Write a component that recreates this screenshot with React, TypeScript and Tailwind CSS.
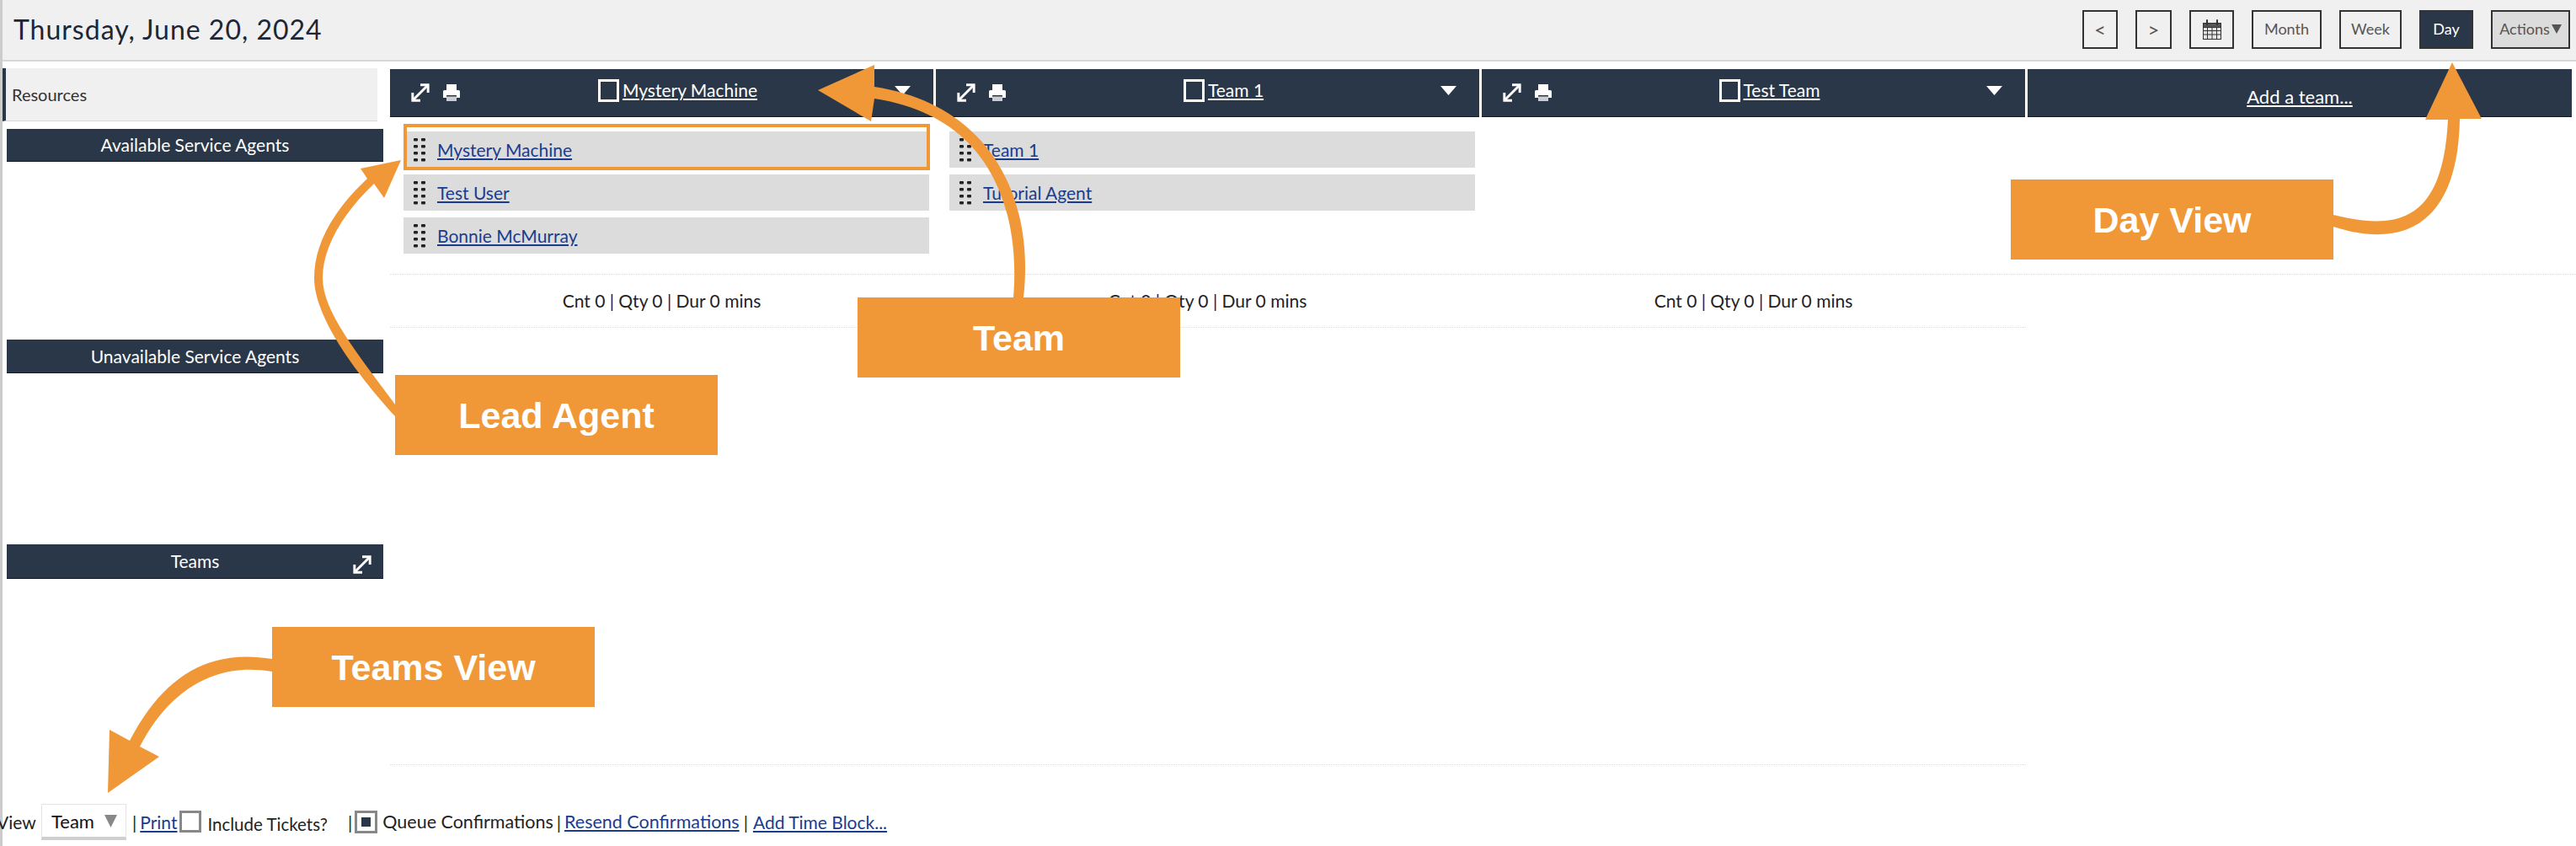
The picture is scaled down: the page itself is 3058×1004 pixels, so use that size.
const ORANGE = "#f09838";

const teams = [
  { name: "Mystery Machine", agents: ["Mystery Machine", "Test User", "Bonnie McMurray"] },
  { name: "Team 1", agents: ["Team 1", "Tutorial Agent"] },
  { name: "Test Team", agents: [] as string[] },
];

function Caret({ className }: { className: string }) {
  return (
    <svg viewBox="0 0 20 12" preserveAspectRatio="none" className={className} fill="currentColor">
      <path d="M0 0H20L10 12Z" />
    </svg>
  );
}

function ExpandIcon({ className }: { className: string }) {
  return (
    <svg viewBox="0 0 24 24" className={className} fill="none" stroke="currentColor" strokeWidth="3.2">
      <path d="M3 21L21 3" />
      <path d="M12 2H22V12" />
      <path d="M2 12V22H12" />
    </svg>
  );
}

function PrintIcon({ className }: { className: string }) {
  return (
    <svg viewBox="0 0 22 22" className={className} fill="currentColor">
      <path d="M5 1H17V8H5Z" />
      <path d="M1 9.5C1 8.5 2 8 3 8H19C20 8 21 8.5 21 9.5V17H17V14H5V17H1Z" />
      <path d="M5 15.5H17V21H5Z" opacity="0.75" />
    </svg>
  );
}

function Grip() {
  return (
    <svg viewBox="0 0 14 28" className="w-[14px] h-[28px] shrink-0 text-[#222]" fill="currentColor">
      <rect x="0" y="0" width="5" height="3.4" rx="1" />
      <rect x="9" y="0" width="5" height="3.4" rx="1" />
      <rect x="0" y="8" width="5" height="3.4" rx="1" />
      <rect x="9" y="8" width="5" height="3.4" rx="1" />
      <rect x="0" y="16" width="5" height="3.4" rx="1" />
      <rect x="9" y="16" width="5" height="3.4" rx="1" />
      <rect x="0" y="24" width="5" height="3.4" rx="1" />
      <rect x="9" y="24" width="5" height="3.4" rx="1" />
    </svg>
  );
}

function CalendarIcon() {
  return (
    <svg viewBox="0 0 22 24" className="w-[22px] h-[24px]" fill="none" stroke="#333">
      <rect x="0.5" y="4.5" width="21" height="19" fill="#e4e4e4" />
      <rect x="0.5" y="4.5" width="21" height="5" fill="#555" />
      <path d="M0.5 13.5H21.5M0.5 18H21.5M5.5 9.5V23.5M11 9.5V23.5M16.5 9.5V23.5" strokeWidth="1" />
      <path d="M5 1V6M17 1V6" strokeWidth="2" strokeLinecap="round" />
    </svg>
  );
}

function TopButton({ label, className }: { label: React.ReactNode; className: string }) {
  return (
    <div className={`h-[46px] flex items-center justify-center border-2 border-[#333] text-[#555] text-[18px] ${className}`}>
      {label}
    </div>
  );
}

function SideHeader({ title, className, icon }: { title: string; className: string; icon?: boolean }) {
  return (
    <div className={`relative ml-[5px] w-[447px] bg-[#2a3748] border-b border-[#111a26] text-white text-[21px] flex items-center justify-center ${className}`}>
      {title}
      {icon && <ExpandIcon className="absolute right-[14px] top-[13px] w-[22px] h-[22px]" />}
    </div>
  );
}

function TeamHeader({ name }: { name: string }) {
  return (
    <div className="w-[645px] h-[57px] bg-[#2a3748] border-b border-[#111a26] text-white flex items-center pl-[25px] pr-[27px]">
      <div className="w-[59px] flex items-center justify-between">
        <ExpandIcon className="w-[22px] h-[22px]" />
        <PrintIcon className="w-[22px] h-[22px]" />
      </div>
      <div className="flex-1 flex items-center justify-center -mt-[6px] gap-[4px]">
        <span className="w-[25px] h-[27px] border-[3px] border-white" />
        <span className="text-[21px] underline underline-offset-2">{name}</span>
      </div>
      <div className="w-[19px] flex justify-end -mt-[6px]">
        <Caret className="w-[19px] h-[11px]" />
      </div>
    </div>
  );
}

function AgentRow({ name, lead }: { name: string; lead?: boolean }) {
  return (
    <div className="relative ml-[16px] mr-[5px] h-[43px] bg-[#dcdcdc] flex items-center pl-[12px] gap-[14px]">
      <Grip />
      <a className="text-[21px] text-[#1a3c8f] underline underline-offset-2">{name}</a>
      {lead && <div className="absolute -top-[9px] -bottom-[3px] left-0 -right-[1px] border-4 border-[#f09838]" />}
    </div>
  );
}

function Label({ text, className }: { text: string; className: string }) {
  return (
    <div className={`absolute w-[383px] h-[95px] pt-[2px] bg-[#f09838] text-white font-bold text-[43px] flex items-center justify-center font-['Liberation_Sans',sans-serif] ${className}`}>
      {text}
    </div>
  );
}

function Arrows() {
  return (
    <svg viewBox="0 0 3058 1004" className="absolute inset-0 w-[3058px] h-[1004px] pointer-events-none" fill={ORANGE}>
      <path d="M1203 353C1210 270 1190 140 1038 117L1034 144L971 107L1038 77L1038 103C1180 125 1228 240 1215 353Z" />
      <path d="M469 480C425 420 383 370 383 330C383 295 405 255 444 218L456 235L476 190L428 200L436 212C390 255 373 295 373 330C373 375 420 440 469 494Z" />
      <path d="M2770 255C2850 275 2900 260 2906 142L2879 142L2911 74L2946 141L2920 141C2918 270 2850 295 2770 269Z" />
      <path d="M323 782C250 770 195 800 154 879L130 866L128 941L189 898L166 886C200 820 255 785 323 797Z" />
    </svg>
  );
}

export default function App() {
  return (
    <div className="relative w-[3058px] h-[1004px] overflow-hidden bg-white flex font-['Lato',sans-serif] text-[#222]">
      <div className="w-[3px] bg-[#cccccc] shrink-0" />
      <div className="flex-1 min-w-0 flex flex-col">
        {/* Date bar */}
        <div className="h-[73px] shrink-0 bg-[#f0f0f0] border-b-2 border-[#d8d8d8] flex items-center pl-[13px] pr-[7px]">
          <h1 className="text-[32px] text-[#1c2636] tracking-[1px] -mt-[2px]">Thursday, June 20, 2024</h1>
          <div className="ml-auto flex gap-[21px] -mt-[2px]">
            <TopButton label={<span className="text-[24px]">&lt;</span>} className="w-[42px]" />
            <TopButton label={<span className="text-[24px]">&gt;</span>} className="w-[43px]" />
            <TopButton label={<CalendarIcon />} className="w-[53px]" />
            <TopButton label="Month" className="w-[83px]" />
            <TopButton label="Week" className="w-[74px]" />
            <TopButton label="Day" className="w-[64px] bg-[#2a3748] border-[#2a3748] !text-white" />
            <TopButton
              label={
                <span className="flex items-center gap-[2px]">
                  Actions
                  <Caret className="w-[12px] h-[11px]" />
                </span>
              }
              className="w-[94px] bg-[#dcdcdc]"
            />
          </div>
        </div>

        <div className="flex-1 min-h-0 flex pt-[9px]">
          {/* Resources column */}
          <div className="w-[460px] shrink-0 -mt-[1px]">
            <div className="w-[445px] h-[63px] bg-[#f0f0f0] border-l-4 border-[#2a3748] border-b border-b-[#d8d8d8] flex items-center pl-[7px] text-[20px] text-[#333]">
              Resources
            </div>
            <SideHeader title="Available Service Agents" className="mt-[9px] h-[39px]" />
            <SideHeader title="Unavailable Service Agents" className="mt-[211px] h-[40px]" />
            <SideHeader title="Teams" className="mt-[203px] h-[41px]" icon />
          </div>

          {/* Team board */}
          <div className="flex-1 min-w-0">
            <div className="flex gap-[3px]">
              {teams.map((t) => (
                <TeamHeader key={t.name} name={t.name} />
              ))}
              <div className="w-[646px] h-[57px] bg-[#2a3748] border-b border-[#111a26] text-white text-[22px] flex items-center justify-center pt-[8px]">
                <span className="underline underline-offset-2">Add a team...</span>
              </div>
            </div>
            <div className="flex gap-[3px] h-[186px] pt-[17px]">
              {teams.map((t) => (
                <div key={t.name} className="w-[645px] flex flex-col gap-[8px]">
                  {t.agents.map((a, i) => (
                    <AgentRow key={a} name={a} lead={t.name === "Mystery Machine" && i === 0} />
                  ))}
                </div>
              ))}
            </div>
            <div className="border-t border-dotted border-[#dcdcdc]">
              <div className="w-[1942px] h-[63px] border-b border-dotted border-[#dcdcdc] flex gap-[3px]">
                {teams.map((t) => (
                  <div key={t.name} className="w-[645px] flex items-center justify-center text-[21px]">
                    Cnt 0 | Qty 0 | Dur 0 mins
                  </div>
                ))}
              </div>
            </div>
            <div className="w-[1942px] h-[519px] border-b border-dotted border-[#dcdcdc]" />
          </div>
        </div>

        {/* Footer controls */}
        <div className="h-[43px] mb-[7px] shrink-0 flex items-center text-[21px] whitespace-nowrap">
          <span className="-ml-[7px] w-[53px]">View</span>
          <div className="w-[101px] h-[43px] border border-[#e4e4e4] border-b-4 border-b-[#cfcfcf] flex items-center pl-[11px] text-[#111] text-[22px]">
            Team
            <Caret className="w-[15px] h-[15px] ml-[12px] text-[#888]" />
          </div>
          <span className="ml-[7px]">|</span>
          <a className="ml-[4px] text-[#1a3c8f] underline underline-offset-2">Print</a>
          <span className="ml-[3px] w-[26px] h-[26px] border-[3px] border-[#888] -mt-[1px]" />
          <span className="ml-[7px] mt-[6px] text-[20.5px]">Include Tickets?</span>
          <span className="ml-[24px]">|</span>
          <span className="ml-[3px] w-[27px] h-[27px] border-[3px] border-[#888] flex items-center justify-center">
            <span className="w-[11px] h-[11px] bg-[#2a3748]" />
          </span>
          <span className="ml-[6px] text-[21.5px]">Queue Confirmations</span>
          <span className="ml-[4px]">|</span>
          <a className="ml-[4px] text-[#1a3c8f] underline underline-offset-2 text-[21.5px]">Resend Confirmations</a>
          <span className="ml-[5px]">|</span>
          <a className="ml-[6px] text-[#1a3c8f] underline underline-offset-2">Add Time Block...</a>
        </div>
      </div>

      {/* Annotation overlay */}
      <Arrows />
      <Label text="Team" className="left-[1018px] top-[353px]" />
      <Label text="Lead Agent" className="left-[469px] top-[445px]" />
      <Label text="Day View" className="left-[2387px] top-[213px]" />
      <Label text="Teams View" className="left-[323px] top-[744px]" />
    </div>
  );
}
